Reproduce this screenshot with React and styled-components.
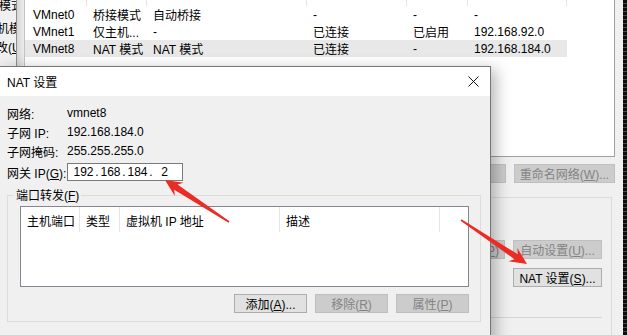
import styled, { createGlobalStyle } from 'styled-components';

const GlobalStyle = createGlobalStyle`
  html, body {
    margin: 0;
    padding: 0;
    background: #f0f0f0;
  }
  body {
    font-family: "Liberation Sans", "Noto Sans CJK SC", sans-serif;
    font-size: 12px;
    color: #000;
  }
`;

const networks = [
  { name: 'VMnet0', type: '桥接模式', ext: '自动桥接', host: '-', dhcp: '-', subnet: '-' },
  { name: 'VMnet1', type: '仅主机...', ext: '-', host: '已连接', dhcp: '已启用', subnet: '192.168.92.0' },
  { name: 'VMnet8', type: 'NAT 模式', ext: 'NAT 模式', host: '已连接', dhcp: '-', subnet: '192.168.184.0', selected: true },
];

const headers = ['名称', '类型', '外部连接', '主机连接', 'DHCP', '子网地址'];

function arrowPoints(x1, y1, x2, y2) {
  const dx = x2 - x1;
  const dy = y2 - y1;
  const len = Math.hypot(dx, dy);
  const ux = dx / len;
  const uy = dy / len;
  const nx = -uy;
  const ny = ux;
  const head = 17;
  const bx = x2 - ux * head;
  const by = y2 - uy * head;
  const nbx = x2 - ux * (head - 4);
  const nby = y2 - uy * (head - 4);
  const p = (x, y, w) => `${x + nx * w},${y + ny * w}`;
  return [
    p(x1, y1, 0.8),
    p(nbx, nby, 3),
    p(bx, by, 8),
    `${x2},${y2}`,
    p(bx, by, -8),
    p(nbx, nby, -3),
    p(x1, y1, -0.8),
  ].join(' ');
}

export default function App() {
  return (
    <>
      <GlobalStyle />
      <Desktop>
        <MainWindow>
          <LeftStrip>
            <StripLine $top={-2} $shift={-1}>模式</StripLine>
            <StripLine $top={7} $shift={-3}>机模</StripLine>
            <StripLine $top={3} $shift={-4}>改(<Key>U</Key>)</StripLine>
          </LeftStrip>
          <Shade />
          <MainArea>
            <NetList>
              <ListHeader>
                {headers.map((h) => (
                  <HeaderCell key={h}>{h}</HeaderCell>
                ))}
              </ListHeader>
              {networks.map((n) => (
                <NetRow key={n.name} $selected={n.selected}>
                  <Cell>{n.name}</Cell>
                  <Cell>{n.type}</Cell>
                  <Cell>{n.ext}</Cell>
                  <Cell>{n.host}</Cell>
                  <Cell>{n.dhcp}</Cell>
                  <Cell>{n.subnet}</Cell>
                </NetRow>
              ))}
            </NetList>
            <ButtonRow>
              <WinButton $w={101} disabled>移除网络(<Key>O</Key>)</WinButton>
              <WinButton $w={101} disabled>重命名网络(<Key>W</Key>)...</WinButton>
            </ButtonRow>
            <InfoGroup>
              <ButtonRow $gap={8}>
                <WinButton $w={89} disabled>DHCP 设置(<Key>P</Key>)</WinButton>
                <WinButton $w={89} disabled>自动设置(<Key>U</Key>)...</WinButton>
              </ButtonRow>
              <ButtonRow $top={9}>
                <WinButton $w={89}>NAT 设置(<Key>S</Key>)...</WinButton>
              </ButtonRow>
              <Divider />
            </InfoGroup>
          </MainArea>
          <DarkStrip />
        </MainWindow>

        <Dialog>
          <TitleBar>
            <Title>NAT 设置</Title>
            <CloseBox>
              <svg width="11" height="11" viewBox="0 0 11 11">
                <path d="M0.5 0.5 L10.5 10.5 M10.5 0.5 L0.5 10.5" stroke="#111" strokeWidth="1" fill="none" />
              </svg>
            </CloseBox>
          </TitleBar>
          <DialogBody>
            <InfoRow>
              <InfoLabel>网络:</InfoLabel>
              <span>vmnet8</span>
            </InfoRow>
            <InfoRow>
              <InfoLabel>子网 IP:</InfoLabel>
              <span>192.168.184.0</span>
            </InfoRow>
            <InfoRow>
              <InfoLabel>子网掩码:</InfoLabel>
              <span>255.255.255.0</span>
            </InfoRow>
            <InfoRow $top={2}>
              <InfoLabel>网关 IP(<Key>G</Key>):</InfoLabel>
              <IpBox>
                <Octet>192</Octet>
                <Dot>.</Dot>
                <Octet>168</Octet>
                <Dot>.</Dot>
                <Octet>184</Octet>
                <Dot>.</Dot>
                <Octet>2</Octet>
              </IpBox>
            </InfoRow>
            <PortGroup>
              <PortLegend>端口转发(<Key>F</Key>)</PortLegend>
              <PortTable>
                <PortHeader>
                  <PortHeadCell>主机端口</PortHeadCell>
                  <PortHeadCell>类型</PortHeadCell>
                  <PortHeadCell>虚拟机 IP 地址</PortHeadCell>
                  <PortHeadCell>描述</PortHeadCell>
                </PortHeader>
              </PortTable>
              <ButtonRow $top={7}>
                <WinButton $w={73}>添加(<Key>A</Key>)...</WinButton>
                <WinButton $w={73} disabled>移除(<Key>R</Key>)</WinButton>
                <WinButton $w={73} disabled>属性(<Key>P</Key>)</WinButton>
              </ButtonRow>
            </PortGroup>
          </DialogBody>
        </Dialog>

        <Arrows width="627" height="335" viewBox="0 0 627 335">
          <polygon points={arrowPoints(229, 222, 165, 180)} fill="#ec2b24" />
          <polygon points={arrowPoints(461, 220, 527, 264)} fill="#ec2b24" />
        </Arrows>
      </Desktop>
    </>
  );
}

const Desktop = styled.div`
  position: relative;
  width: 627px;
  height: 335px;
  overflow: hidden;
  background: #f0f0f0;
`;

const MainWindow = styled.div`
  display: flex;
  height: 100%;
`;

const LeftStrip = styled.div`
  width: 16px;
  flex: none;
  border-right: 1px solid #8f8f8f;
  overflow: hidden;
  display: flex;
  flex-direction: column;
`;

const StripLine = styled.div`
  white-space: nowrap;
  line-height: 16px;
  margin-top: ${(p) => p.$top}px;
  margin-left: ${(p) => p.$shift}px;
`;

const Key = styled.span`
  text-decoration: underline;
`;

const Shade = styled.div`
  width: 7px;
  flex: none;
  background: linear-gradient(to right, #d6d6d6, #ececec);
`;

const MainArea = styled.div`
  flex: 1;
  min-width: 0;
  display: flex;
  flex-direction: column;
  padding-right: 8px;
`;

const NetList = styled.div`
  margin-top: -30px;
  height: 187px;
  box-sizing: border-box;
  background: #fff;
  border: 1px solid #c4c4c4;
  border-right-color: #a0a0a0;
  border-bottom-color: #a0a0a0;
`;

const columns = '62px 60px 160px 100px 61px 99px';

const ListHeader = styled.div`
  display: grid;
  grid-template-columns: ${columns};
  width: 542px;
  height: 35px;
`;

const HeaderCell = styled.div`
  border-right: 1px solid #e5e5e5;
  padding: 2px 0 0 6px;
  &:first-child {
    padding-left: 8px;
  }
`;

const NetRow = styled.div`
  display: grid;
  grid-template-columns: ${columns};
  width: 542px;
  height: 17px;
  align-items: center;
  background: ${(p) => (p.$selected ? '#e8e8e8' : 'transparent')};
`;

const Cell = styled.div`
  padding-left: 6px;
  white-space: nowrap;
  overflow: hidden;
  &:first-child {
    padding-left: 8px;
  }
`;

const ButtonRow = styled.div`
  display: flex;
  justify-content: flex-end;
  gap: ${(p) => p.$gap ?? 8}px;
  margin-top: ${(p) => p.$top ?? 7}px;
`;

const WinButton = styled.button`
  width: ${(p) => p.$w}px;
  height: 19px;
  box-sizing: border-box;
  padding: 0;
  font: inherit;
  white-space: nowrap;
  overflow: hidden;
  border: 1px solid ${(p) => (p.disabled ? '#bfbfbf' : '#adadad')};
  background: ${(p) => (p.disabled ? '#cccccc' : '#e1e1e1')};
  color: ${(p) => (p.disabled ? '#838383' : '#000')};
`;

const InfoGroup = styled.div`
  flex: 1;
  margin: 14px 3px 0 0;
  padding: 35px 9px 0 0;
  border: 1px solid #dcdcdc;
  border-bottom: none;
  display: flex;
  flex-direction: column;
`;

const Divider = styled.div`
  height: 1px;
  margin-top: 30px;
  background: #d5d5d5;
`;

const DarkStrip = styled.div`
  width: 4px;
  flex: none;
  background: repeating-linear-gradient(to bottom, #0c0c0c 0 3px, #4a4a4a 3px 4px);
`;

const Dialog = styled.div`
  position: absolute;
  left: -2px;
  top: 66px;
  width: 493px;
  height: 300px;
  box-sizing: border-box;
  border: 1px solid #767676;
  background: #f0f0f0;
  box-shadow: 5px 3px 14px rgba(0, 0, 0, 0.28);
`;

const TitleBar = styled.div`
  height: 29px;
  background: #fff;
  display: flex;
  align-items: center;
  padding-left: 8px;
`;

const Title = styled.div`
  flex: 1;
  font-size: 12px;
`;

const CloseBox = styled.div`
  width: 34px;
  height: 29px;
  display: flex;
  align-items: center;
  justify-content: center;
`;

const DialogBody = styled.div`
  padding: 7.5px 9px 0 8px;
`;

const InfoRow = styled.div`
  display: flex;
  align-items: center;
  height: 19px;
  margin-top: ${(p) => p.$top ?? 0}px;
  white-space: nowrap;
`;

const InfoLabel = styled.div`
  width: 60px;
  flex: none;
`;

const IpBox = styled.div`
  width: 116px;
  height: 18px;
  box-sizing: border-box;
  border: 1px solid #7a7a7a;
  background: #fff;
  display: flex;
  align-items: center;
  padding-left: 5px;
`;

const Octet = styled.span`
  width: 21px;
  text-align: center;
`;

const Dot = styled.span`
  width: 6px;
  text-align: center;
`;

const PortGroup = styled.fieldset`
  margin: 7px 0 0 0;
  padding: 3px 11px 8px 12px;
  min-width: 0;
  border: 1px solid #dcdcdc;
  border-radius: 0;
`;

const PortLegend = styled.legend`
  margin-left: -6px;
  padding: 0 2px;
  line-height: 14px;
`;

const PortTable = styled.div`
  height: 81px;
  box-sizing: border-box;
  background: #fff;
  border: 1px solid #828790;
`;

const PortHeader = styled.div`
  display: grid;
  grid-template-columns: 59px 40px 160px 160px;
  height: 25px;
`;

const PortHeadCell = styled.div`
  border-right: 1px solid #e5e5e5;
  padding: 5px 0 0 6px;
  white-space: nowrap;
`;

const Arrows = styled.svg`
  position: absolute;
  left: 0;
  top: 0;
  pointer-events: none;
`;
